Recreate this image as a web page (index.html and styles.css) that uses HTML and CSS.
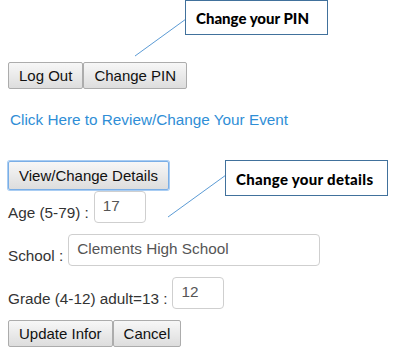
FILE: index.html
```html
<!DOCTYPE html>
<html lang="en">
<head>
    <meta charset="UTF-8">
    <meta name="viewport" content="width=device-width, initial-scale=1.0">
    <title>Participant Details</title>
    <link rel="stylesheet" href="styles.css">
</head>
<body>
    <div class="page">
        <div class="btn-group top-buttons">
            <button class="btn">Log Out</button>
            <button class="btn">Change PIN</button>
        </div>

        <a class="event-link" href="#">Click Here to Review/Change Your Event</a>

        <button class="btn btn-details">View/Change Details</button>

        <div class="form-row row-age">
            <label for="age">Age (5-79) :</label>
            <input type="text" id="age" class="field field-small" value="17">
        </div>
        <div class="form-row">
            <label for="school">School :</label>
            <input type="text" id="school" class="field field-wide" value="Clements High School">
        </div>
        <div class="form-row">
            <label for="grade">Grade (4-12) adult=13 :</label>
            <input type="text" id="grade" class="field field-small" value="12">
        </div>

        <div class="btn-group bottom-buttons">
            <button class="btn">Update Infor</button>
            <button class="btn">Cancel</button>
        </div>

        <!-- annotation callouts -->
        <svg class="pointers" width="394" height="363">
            <line x1="135" y1="56" x2="186" y2="19" />
            <line x1="168" y1="217" x2="226" y2="175" />
        </svg>
        <div class="callout callout-pin">Change your PIN</div>
        <div class="callout callout-details">Change your details</div>
    </div>
</body>
</html>
```

FILE: styles.css
```css
body{
    margin: 0;
    background: #fff;
    font-family: "Liberation Sans", Arial, sans-serif;
    font-size: 15.3px;
    color: #333;
}
.page{
    position: relative;
    width: 394px;
    height: 363px;
    padding: 0 8px;
    box-sizing: border-box;
    overflow: hidden;
}
.btn-group{
    display: flex;
}
.top-buttons{
    padding-top: 62px;
}
.btn{
    height: 27px;
    padding: 0 10px;
    font-family: "Liberation Sans", Arial, sans-serif;
    font-size: 15px;
    color: #111;
    background: linear-gradient(#f7f7f7, #dddddd);
    border: 1px solid #acacac;
    border-radius: 2px;
}
.event-link{
    display: block;
    margin: 22px 0 0 2px;
    line-height: 18px;
    color: #2f8ed6;
    text-decoration: none;
}
.btn-details{
    display: block;
    height: 29px;
    margin-top: 32px;
    padding: 0 10px;
    border: 1px solid #7aaee6;
    box-shadow: 0 0 0 1px #a9cdf3;
}
.form-row{
    display: flex;
    align-items: flex-end;
    margin-bottom: 11px;
}
.row-age{
    margin-top: 1px;
}
.form-row label{
    line-height: 17px;
    padding-bottom: 2px;
    color: #333;
}
.field{
    height: 32px;
    margin-left: 5px;
    padding: 0 8px 3px;
    box-sizing: border-box;
    font-family: "Liberation Sans", Arial, sans-serif;
    font-size: 15.3px;
    color: #555;
    border: 1px solid #cfcfcf;
    border-radius: 4px;
    outline: none;
}
.field-small{
    width: 52px;
}
.field-wide{
    width: 252px;
}
.pointers{
    position: absolute;
    top: 0;
    left: 0;
}
.pointers line{
    stroke: #5b9bd5;
    stroke-width: 1;
}
.callout{
    position: absolute;
    box-sizing: border-box;
    background: #fff;
    border: 1.5px solid #41719c;
    font-family: Lato, "Open Sans", sans-serif;
    font-weight: 900;
    font-size: 15px;
    color: #000;
    padding-left: 10px;
}
.callout-pin{
    left: 185px;
    top: 0;
    width: 143px;
    height: 35px;
    line-height: 34px;
}
.callout-details{
    left: 225px;
    top: 160px;
    width: 163px;
    height: 36px;
    line-height: 36px;
    letter-spacing: 0.3px;
}
```
